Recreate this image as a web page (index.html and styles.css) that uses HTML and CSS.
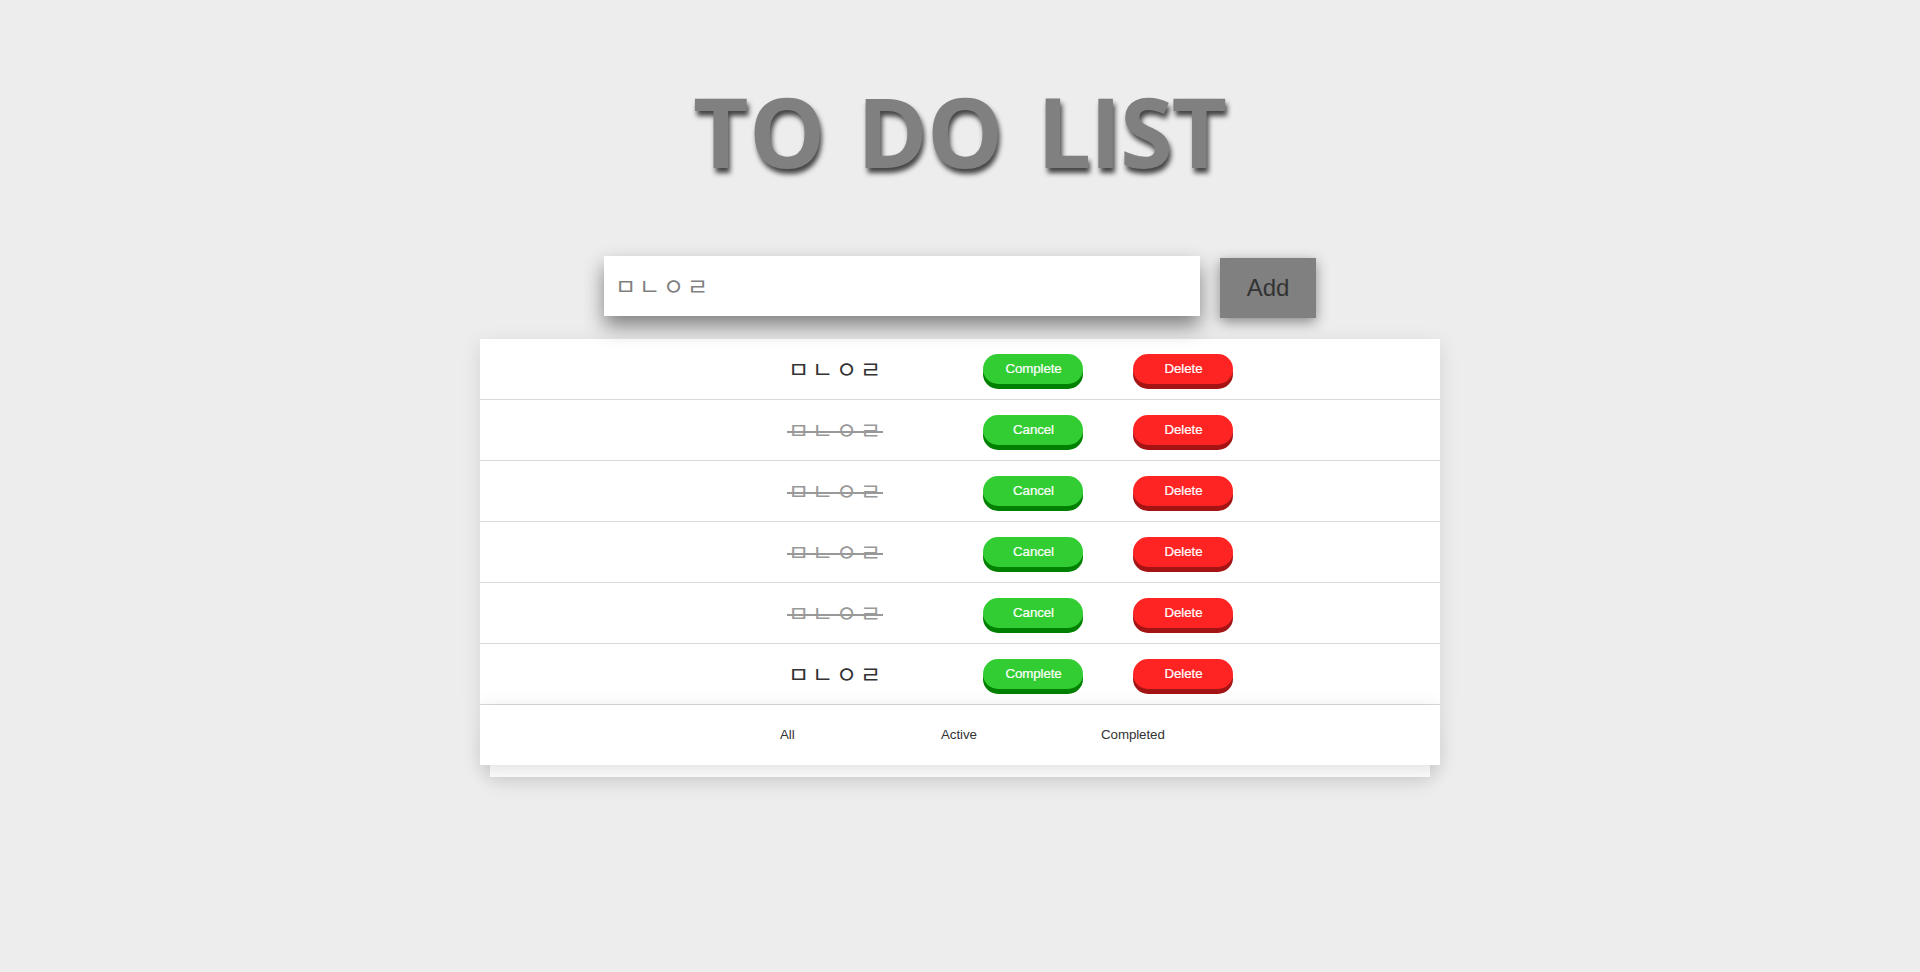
FILE: index.html
```html
<!DOCTYPE html>
<html lang="ko">
<head>
<meta charset="utf-8">
<title>To Do List</title>
<link rel="stylesheet" href="styles.css">
</head>
<body>
<h1 class="title"><span class="word-to">TO</span><span class="word-do">DO</span><span class="word-list">LIST</span></h1>
<form class="entry">
  <div class="field"><span class="jamo">ㅁㄴㅇㄹ</span></div>
  <button class="add" type="button">Add</button>
</form>
<main class="board">
  <ul class="todos">
    <li class="todo"><span class="label jamo">ㅁㄴㅇㄹ</span><button class="btn done">Complete</button><button class="btn delete">Delete</button></li>
    <li class="todo completed"><span class="label jamo">ㅁㄴㅇㄹ</span><button class="btn done">Cancel</button><button class="btn delete">Delete</button></li>
    <li class="todo completed"><span class="label jamo">ㅁㄴㅇㄹ</span><button class="btn done">Cancel</button><button class="btn delete">Delete</button></li>
    <li class="todo completed"><span class="label jamo">ㅁㄴㅇㄹ</span><button class="btn done">Cancel</button><button class="btn delete">Delete</button></li>
    <li class="todo completed"><span class="label jamo">ㅁㄴㅇㄹ</span><button class="btn done">Cancel</button><button class="btn delete">Delete</button></li>
    <li class="todo"><span class="label jamo">ㅁㄴㅇㄹ</span><button class="btn done">Complete</button><button class="btn delete">Delete</button></li>
  </ul>
  <footer class="filters"><span class="all">All</span><span class="active">Active</span><span>Completed</span></footer>
</main>
</body>
</html>
```

FILE: styles.css
```css
* { box-sizing: border-box; }
html { background: #ededed; }
body { margin: 0; min-height: 100vh; isolation: isolate; background: #ededed; color: #333; font-family: "Liberation Sans", "Noto Sans CJK KR", sans-serif; }
button { border: 0; padding: 0; font-family: inherit; color: inherit; }
.title { display: flex; height: 256px; margin: 0; padding: 66px 0 0 693px; font: bold 96px/130px "Open Sans", sans-serif; color: gray; text-shadow: 2px 5px 5px #444; white-space: nowrap; }
.title span { display: block; }
.word-to { width: 164px; letter-spacing: .5px; }
.word-do { width: 180px; letter-spacing: -1px; }
.word-list { letter-spacing: -1.5px; }
.entry { display: flex; height: 83px; padding-left: 604px; gap: 20px; }
.field { width: 596px; height: 60px; padding-left: 11px; background: #fff; color: gray; box-shadow: 0 10px 20px gray; }
.add { width: 96px; height: 60px; margin-top: 2px; background: gray; color: #333; font-size: 24px; box-shadow: 0 4px 12px #888; }
.jamo { font: 23px/58px "Noto Sans CJK KR", sans-serif; letter-spacing: 2.84px; white-space: nowrap; }
.board { width: 960px; margin: 0 auto; }
.todos { margin: 0; padding: 0; list-style: none; background: #fff; box-shadow: 0 5px 20px rgba(0,0,0,.1); }
.todo { display: flex; align-items: flex-start; height: 61px; padding-left: 307px; border-bottom: 1px solid #d9d9d9; }
.label { display: block; width: 96px; height: 60px; padding-left: 1px; }
.completed .label { color: #999; background: linear-gradient(#999, #999) 0 31px / 96px 2px no-repeat; }
.btn { width: 100px; height: 30px; margin-top: 15px; padding-left: 1px; border-radius: 15px; color: #fff; font-size: 13.333px; line-height: 28px; letter-spacing: -.1px; -webkit-text-stroke: .2px #fff; }
.done { margin-left: 100px; background: #32cd32; box-shadow: 0 5px 0 green; }
.delete { margin-left: 50px; background: #ff2424; box-shadow: 0 5px 0 #a51414; }
.filters { position: relative; display: flex; height: 60px; padding-left: 300px; background: #fff; font-size: 13.333px; line-height: 60px; letter-spacing: -.08px; box-shadow: 0 5px 20px rgba(0,0,0,.13); }
.filters::after { content: ""; position: absolute; z-index: -1; left: 10px; right: 10px; bottom: -12px; height: 50px; background: #fff; box-shadow: 0 5px 20px rgba(0,0,0,.12); }
.all { width: 161px; }
.active { width: 160px; }
```
